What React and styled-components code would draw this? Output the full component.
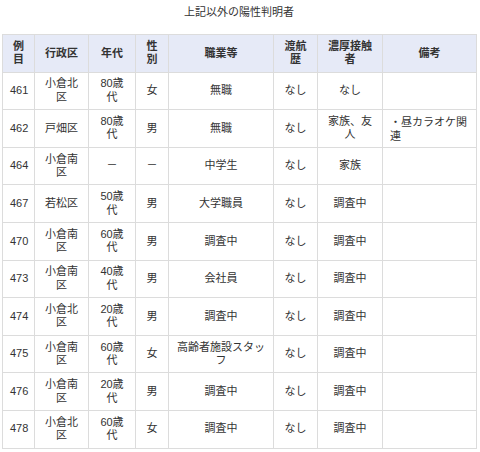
import styled, { createGlobalStyle } from 'styled-components';

const GlobalStyle = createGlobalStyle`
    body {
        margin: 0;
        background: #ffffff;
        font-family: 'Liberation Sans', 'Noto Sans CJK JP', sans-serif;
        color: #333333;
    }
`;

const Page = styled.div`
    width: 480px;
    padding: 5px 4px 0 2px;
    box-sizing: border-box;
`;

const Title = styled.div`
    text-align: center;
    font-size: 11px;
    line-height: 14px;
    height: 29px;
`;

const Table = styled.table`
    width: 474px;
    table-layout: fixed;
    border-collapse: collapse;
    font-size: 11px;
    line-height: 13.5px;
`;

const Row = styled.tr`
    height: 37.6px;
`;

const HeadCell = styled.th`
    background: #e6eaf7;
    border: 1px solid #dcdcdc;
    font-weight: bold;
    text-align: center;
    padding: 2px 7px;
    color: #333333;
`;

const Cell = styled.td`
    border: 1px solid #dcdcdc;
    text-align: ${(p) => p.$align || 'center'};
    vertical-align: ${(p) => (p.$align === 'left' ? 'top' : 'middle')};
    padding: ${(p) => (p.$align === 'left' ? '6px 7px 2px' : '2px 7px')};
    white-space: ${(p) => (p.$nowrap ? 'nowrap' : 'normal')};
    overflow: visible;
`;

const widths = [32, 54, 47, 33, 105, 44, 65, 94];
const headers = ['例目', '行政区', '年代', '性別', '職業等', '渡航歴', '濃厚接触者', '備考'];

const rows = [
    ['461', '小倉北区', '80歳代', '女', '無職', 'なし', 'なし', ''],
    ['462', '戸畑区', '80歳代', '男', '無職', 'なし', '家族、友人', '・昼カラオケ関連'],
    ['464', '小倉南区', '－', '－', '中学生', 'なし', '家族', ''],
    ['467', '若松区', '50歳代', '男', '大学職員', 'なし', '調査中', ''],
    ['470', '小倉南区', '60歳代', '男', '調査中', 'なし', '調査中', ''],
    ['473', '小倉南区', '40歳代', '男', '会社員', 'なし', '調査中', ''],
    ['474', '小倉北区', '20歳代', '男', '調査中', 'なし', '調査中', ''],
    ['475', '小倉南区', '60歳代', '女', '高齢者施設スタッフ', 'なし', '調査中', ''],
    ['476', '小倉南区', '20歳代', '男', '調査中', 'なし', '調査中', ''],
    ['478', '小倉北区', '60歳代', '女', '調査中', 'なし', '調査中', ''],
];

const App = () => {
    return (
        <Page>
            <GlobalStyle />
            <Title>上記以外の陽性判明者</Title>
            <Table>
                <colgroup>
                    {widths.map((w, i) => (
                        <col key={i} style={{ width: w }} />
                    ))}
                </colgroup>
                <thead>
                    <Row>
                        {headers.map((h) => (
                            <HeadCell key={h}>{h}</HeadCell>
                        ))}
                    </Row>
                </thead>
                <tbody>
                    {rows.map((r) => (
                        <Row key={r[0]}>
                            {r.map((v, i) => (
                                <Cell
                                    key={i}
                                    $align={i === 7 ? 'left' : 'center'}
                                    $nowrap={i === 0}
                                >
                                    {v}
                                </Cell>
                            ))}
                        </Row>
                    ))}
                </tbody>
            </Table>
        </Page>
    );
};

export default App;
